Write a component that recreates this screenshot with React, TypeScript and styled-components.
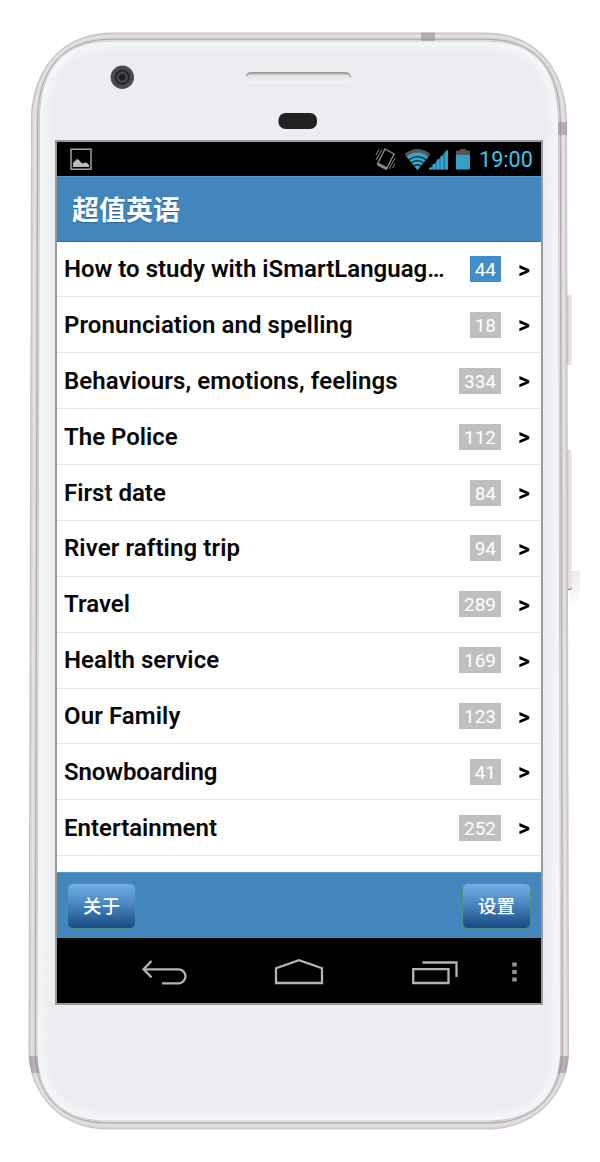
import React from "react";
import styled, { createGlobalStyle } from "styled-components";

const GlobalStyle = createGlobalStyle`
  * { box-sizing: border-box; }
  body { margin: 0; background: #fff; font-family: Roboto, "Noto Sans CJK SC", sans-serif; }
`;

const Device = styled.main`
  position: relative;
  width: 600px;
  height: 1162px;
  padding: 140px 57px 0 55px;
  overflow: hidden;
`;

const Shell = styled.svg`
  position: absolute;
  inset: 0;
  z-index: 0;
`;

const Screen = styled.section`
  position: relative;
  z-index: 1;
  display: flex;
  flex-direction: column;
  width: 488px;
  height: 865px;
  border: 2px solid #98999b;
  background: #fff;
`;

const StatusBar = styled.div`
  display: flex;
  align-items: center;
  height: 34px;
  flex: none;
  padding: 0 8px 0 13px;
  background: #000;
`;

const StatusIcons = styled.svg`
  display: block;
  margin-left: auto;
`;

const Clock = styled.time`
  width: 54px;
  margin-left: 8px;
  padding-top: 2px;
  color: #40c4ee;
  font-size: 21.6px;
  line-height: 34px;
  white-space: nowrap;
`;

const Header = styled.header`
  display: flex;
  align-items: center;
  height: 65.6px;
  flex: none;
  padding: 0 15px;
  background: #4386bd;
  border-top: 1px solid #5797ca;
  border-bottom: 1px solid #2f6ea6;
`;

const Title = styled.h1`
  margin: 0;
  color: #fff;
  font-family: "Noto Sans CJK SC", sans-serif;
  font-size: 27px;
  font-weight: 700;
  line-height: 40px;
  text-shadow: 0 1px 1px #2d6596;
`;

const List = styled.ul`
  display: flex;
  flex-direction: column;
  flex: 1;
  margin: 0;
  padding: 0;
  list-style: none;
`;

const Row = styled.li`
  display: flex;
  align-items: center;
  height: 55.88px;
  padding: 0 9px 0 7px;
  border-bottom: 1px solid #e6e6e6;
`;

const Label = styled.span<{ $spacing?: number }>`
  flex: 1;
  color: #080808;
  font-size: 24px;
  font-weight: 600;
  line-height: 32px;
  letter-spacing: ${(p) => p.$spacing ?? 0}px;
  white-space: nowrap;
`;

const Count = styled.span<{ $active?: boolean }>`
  height: 26px;
  padding: 0 5px;
  background: ${(p) => (p.$active ? "#438ccb" : "#bfbfbf")};
  color: #fff;
  font-size: 19px;
  line-height: 27px;
  text-align: center;
`;

const Arrow = styled.span`
  width: 14px;
  margin-left: 17px;
  padding-top: 3px;
  color: #000;
  font-size: 23px;
  font-weight: 700;
  line-height: 30px;
`;

const Footer = styled.footer`
  display: flex;
  align-items: center;
  justify-content: space-between;
  height: 66px;
  flex: none;
  padding: 0 10px;
  background: #4386bd;
  border-top: 1px solid #5797ca;
`;

const Button = styled.button`
  width: 69px;
  height: 46px;
  padding: 0;
  border: 1px solid #4f9187;
  border-radius: 6px;
  background: linear-gradient(#75aee6, #4a86c2 45%, #174a82);
  color: #fff;
  font-family: "Noto Sans CJK SC", sans-serif;
  font-size: 18.5px;
  font-weight: 500;
  line-height: 43px;
`;

const NavBar = styled.nav`
  height: 65px;
  flex: none;
  background: #000;
`;

const lessons: { name: string; count: number; spacing?: number }[] = [
  { name: "How to study with iSmartLanguag…", count: 44, spacing: 0.01 },
  { name: "Pronunciation and spelling", count: 18, spacing: 0.08 },
  { name: "Behaviours, emotions, feelings", count: 334, spacing: 0.1 },
  { name: "The Police", count: 112 },
  { name: "First date", count: 84 },
  { name: "River rafting trip", count: 94, spacing: 0.1 },
  { name: "Travel", count: 289 },
  { name: "Health service", count: 169, spacing: 0.07 },
  { name: "Our Family", count: 123, spacing: 0.1 },
  { name: "Snowboarding", count: 41, spacing: -0.1 },
  { name: "Entertainment", count: 252 },
];

const outline = (d: number) => {
  const l = 31 + d, r = 567 - d, t = 32.5 + d, b = 1129.5 - d;
  const bl = 28.5 + d, br = 569 - d;
  return `M112 ${t} H486 C535 ${t} ${r} 68 ${r} 122 L${br} 1050 C${br} 1096 533 ${b} 489 ${b} H107 C62 ${b} ${bl} 1096 ${bl} 1050 L${l} 122 C${l} 68 63 ${t} 112 ${t} Z`;
};

const DeviceShell = () => (
  <Shell width="600" height="1162" viewBox="0 0 600 1162" fill="none">
    <defs>
      <linearGradient id="power" x1="567" x2="572" y1="0" y2="0" gradientUnits="userSpaceOnUse">
        <stop stopColor="#c5c1c1" /><stop offset=".5" stopColor="#e9e6e5" /><stop offset="1" stopColor="#dcd9d9" />
      </linearGradient>
      <linearGradient id="shade" x1="0" x2="0" y1="571" y2="606" gradientUnits="userSpaceOnUse">
        <stop stopColor="#e9e9e9" /><stop offset="1" stopColor="#fff" />
      </linearGradient>
      <linearGradient id="slot" x1="0" x2="0" y1="72" y2="84" gradientUnits="userSpaceOnUse">
        <stop stopColor="#999b9a" /><stop offset=".2" stopColor="#cfd1d0" /><stop offset=".35" stopColor="#e5e7e6" /><stop offset="1" stopColor="#f4f5f5" />
      </linearGradient>
      <radialGradient id="lens">
        <stop stopColor="#17171a" /><stop offset=".25" stopColor="#222327" /><stop offset=".38" stopColor="#54555a" /><stop offset=".55" stopColor="#1d1e20" /><stop offset=".7" stopColor="#48494b" /><stop offset="1" stopColor="#4c4d4f" />
      </radialGradient>
      <filter id="soft" x="-5%" y="-5%" width="110%" height="110%"><feGaussianBlur stdDeviation="5" /></filter>
      <clipPath id="face"><path d={outline(9)} /></clipPath>
      <clipPath id="body"><path d={outline(0)} /></clipPath>
    </defs>
    <rect x="569" y="571" width="11" height="35" fill="url(#shade)" />
    <rect x="566" y="295" width="5.5" height="70" rx="1.5" fill="url(#power)" />
    <rect x="566" y="450" width="5.5" height="140" rx="1.5" fill="url(#power)" />
    <path d="M568 589.5h2.5l1-2" stroke="#777" />
    <path d={outline(0)} fill="#c7bfc0" />
    <path d={outline(1)} fill="#d8d1d1" />
    <path d={outline(2.5)} fill="#e6e1e1" />
    <path d={outline(5)} fill="#d7d1d2" />
    <path d={outline(6.2)} fill="#aaa5a7" />
    <path d={outline(7.2)} fill="#dedbdc" />
    <path d={outline(8.4)} fill="#bab8ba" />
    <g clipPath="url(#body)" fill="#928a90" fillOpacity=".55">
      <rect x="421" y="32" width="14" height="9" />
      <rect x="556" y="122" width="12" height="13" />
      <path d="M554 1056h16v17h-18zM28 1056h12l4 17H28z" />
    </g>
    <path d={outline(9)} fill="#ecedf1" />
    <g clipPath="url(#face)"><path d={outline(9)} stroke="#f6f8fb" strokeWidth="11" filter="url(#soft)" /></g>
    <circle cx="122.3" cy="77.3" r="11.7" fill="url(#lens)" />
    <rect x="244.5" y="72" width="107.5" height="12" rx="6" fill="url(#slot)" />
    <path d="M246 76q2-3 5-3H345q4 0 6 4" stroke="#8e9190" />
    <rect x="278.5" y="113" width="38.5" height="16" rx="7" fill="#202123" />
  </Shell>
);

const PictureIcon = () => (
  <svg width="22" height="23" viewBox="0 0 22 23" fill="none">
    <rect x="1" y="1.2" width="20" height="20" stroke="#a3a3a3" strokeWidth="1.5" />
    <path d="M3 19v-4l2-2 2-2 2 1 2 2.500 2 1 2-1 2 .5 2 2v2z" fill="#bcbcbc" />
  </svg>
);

const SystemIcons = () => (
  <StatusIcons width="96" height="24" viewBox="0 0 96 24" fill="none">
    <g stroke="#8a8a8a" strokeWidth="1">
      <path d="M10 2 19 7 11.5 22 2.5 17z" strokeWidth="1.4" />
      <path d="m2.8 17.2 9 4.4" strokeWidth="3" />
      <path d="M1 8 4 2.5M1 13l6-10.5M14 22l6-10.5M17.5 21l2.5-4.5" />
    </g>
    <path d="M29.5 7Q42.5-3 55.500 7L42.500 23z" fill="#5b5552" />
    <path d="M31.700 9.700Q42.500 1.500 53.300 9.700L42.500 23z" fill="#36a5cc" />
    <g stroke="#102b36" strokeWidth="1.3">
      <path d="M34 12.600q8.500-6 17 0" /><path d="M36.500 15.800q6-4.200 12 0" /><path d="M39 19q3.500-2.500 7 0" />
    </g>
    <path d="M54 22.500 73 2v20.500z" fill="#257c9c" />
    <path d="M55.500 22.500v-2M59 22.500v-5.500M63 22.500v-10M67 22.500V9M71.500 22.500V4" stroke="#35a6cf" strokeWidth="2.6" />
    <path d="M81 8V3.500h4V2h6v1.500h4V8z" fill="#5b5552" />
    <path d="M81 8h14v14.500H81z" fill="#35a0c7" />
  </StatusIcons>
);

const NavigationIcons = () => (
  <svg width="484" height="65" viewBox="57 938 484 65" fill="none" stroke="#b4b4b4" strokeWidth="2.3">
    <path d="m151.500 961-8 8.200 8 8.200M144 969.300h34.500a7 7 0 0 1 0 14H162" />
    <path d="M276 983V968.200L299 960.200 322 968.200V983z" />
    <path d="M413.200 969.200h35.300V983H413.200zM422.500 962.500h34V977" />
    <path d="M514.500 962.500v4M514.500 970v4M514.500 977.500v4" strokeWidth="4.600" stroke="#929292" />
  </svg>
);

export default function App() {
  return (
    <Device>
      <GlobalStyle />
      <DeviceShell />
      <Screen>
        <StatusBar>
          <PictureIcon />
          <SystemIcons />
          <Clock>19:00</Clock>
        </StatusBar>
        <Header><Title>超值英语</Title></Header>
        <List>
          {lessons.map((lesson, index) => (
            <Row key={lesson.name}>
              <Label $spacing={lesson.spacing}>{lesson.name}</Label>
              <Count $active={index === 0}>{lesson.count}</Count>
              <Arrow>&gt;</Arrow>
            </Row>
          ))}
        </List>
        <Footer><Button>关于</Button><Button>设置</Button></Footer>
        <NavBar><NavigationIcons /></NavBar>
      </Screen>
    </Device>
  );
}
